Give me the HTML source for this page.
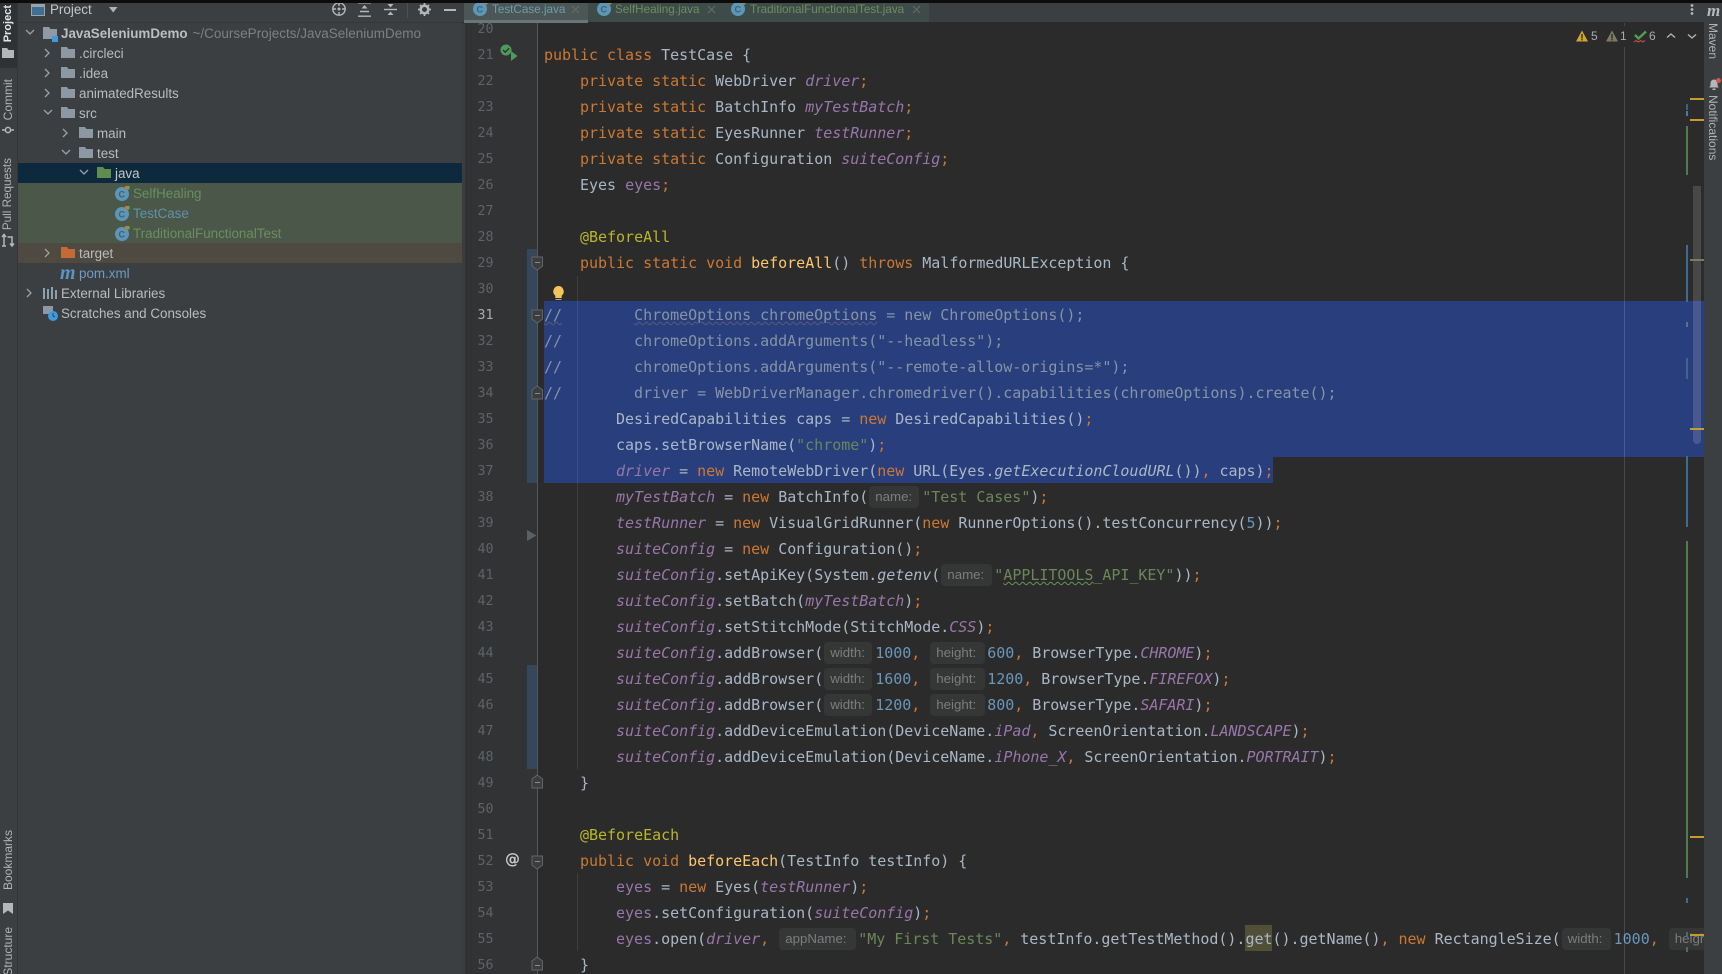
<!DOCTYPE html>
<html><head><meta charset="utf-8"><style>
html,body{margin:0;padding:0;background:#2b2b2b}
#r{position:relative;width:1722px;height:974px;overflow:hidden;background:#2b2b2b;font-family:"Liberation Sans",sans-serif;filter:blur(.35px)}
.a{position:absolute}
.v{position:absolute;writing-mode:vertical-rl;transform:rotate(180deg);font-size:12px;color:#b0b2b3;white-space:nowrap;line-height:14px}
.h{position:absolute;writing-mode:vertical-rl;font-size:12px;color:#b0b2b3;white-space:nowrap;line-height:14px}
.row{position:absolute;left:18px;width:444px;height:20px}
.t{position:absolute;font-size:13.4px;line-height:20px;color:#bbb;white-space:nowrap;margin-top:1px}
.g{color:#6a8f5f}
svg{position:absolute;overflow:visible}
#code{position:absolute;left:544px;top:22px;width:1160px;height:952px;overflow:hidden}
#code pre{position:absolute;left:0;top:-6px;margin:0;font:15px/26px "DejaVu Sans Mono",monospace;letter-spacing:-.025px;color:#a9b7c6;white-space:pre}
#nums{position:absolute;left:462px;top:17px;width:31.5px;text-align:right;font:13.3px/26px "DejaVu Sans Mono",monospace;color:#606366;white-space:pre}
.k{color:#cc7832}.f{color:#9876aa}.fi{color:#9876aa;font-style:italic}.s{color:#6a8759}.n{color:#6897bb}.an{color:#bbb529}.m{color:#ffc66d}.c{color:#8693a6}
.si{font-style:italic}
.hn{display:inline-block;box-sizing:border-box;height:22px;background:#353636;border-radius:4px;color:#7b7d7e;font:13.3px/22px "Liberation Sans",sans-serif;letter-spacing:0;padding-left:6px;white-space:nowrap;overflow:hidden;vertical-align:top;margin-top:2px}
.tab{position:absolute;top:1px;height:19px;font-size:11.7px;line-height:18px;white-space:nowrap}
.st{position:absolute;left:1686px;width:2px}
.yl{position:absolute;left:1690px;width:14px;height:2px;background:#c79b2e}
.ci{font:bold 9px "Liberation Sans",sans-serif;fill:#44606e}
</style></head><body><div id="r">

<!-- left strip -->
<div class="a" style="left:0;top:0;width:18px;height:974px;background:#3c3f41"></div>
<div class="a" style="left:0;top:3px;width:18px;height:65px;background:#2f3234"></div>
<div class="a" style="left:17px;top:0;width:1px;height:974px;background:#333536"></div>
<div class="v" style="left:1px;top:5px;color:#e4e4e4;font-weight:bold;font-size:11px">Project</div>
<svg style="left:2px;top:48px" width="12" height="10"><path d="M0 0h5l1.5 2H12v8H0z" fill="#b4b6b7"/></svg>
<div class="v" style="left:1px;top:79px">Commit</div>
<svg style="left:2px;top:124px" width="12" height="12"><circle cx="6" cy="6" r="2.6" fill="none" stroke="#b4b6b7" stroke-width="1.5"/><path d="M0 6h3M9 6h3" stroke="#b4b6b7" stroke-width="1.5"/></svg>
<div class="v" style="left:1px;top:158px;font-size:11.7px">Pull Requests</div>
<svg style="left:2px;top:234px" width="12" height="12"><path d="M2 12V1M0 3l2-2.5L4 3M5.500 3H10V12M8 9.500l2 2.500 2-2.500M0 12h4" fill="none" stroke="#b4b6b7" stroke-width="1.5"/></svg>
<div class="v" style="left:1px;top:830px">Bookmarks</div>
<svg style="left:3px;top:903px" width="10" height="11"><path d="M0 0h10v11L5 7.500 0 11z" fill="#b4b6b7"/></svg>
<div class="v" style="left:1px;top:927px">Structure</div>

<!-- project panel -->
<div class="a" style="left:18px;top:0;width:444px;height:974px;background:#3c3f41"></div>
<div class="a" style="left:18px;top:22px;width:444px;height:1px;background:#35383a"></div>
<svg style="left:31px;top:4px" width="14" height="12"><rect x=".5" y=".5" width="13" height="11" fill="#3f6f92" stroke="#9aa3a8"/><rect x=".5" y=".5" width="13" height="2.5" fill="#9aa3a8"/></svg>
<div class="t" style="left:50px;top:0;margin:0;color:#c4c6c7">Project</div>
<svg style="left:109px;top:7px" width="9" height="6"><path d="M0 0h8.500L4.200 5.500z" fill="#b0b2b3"/></svg>
<svg style="left:332px;top:2px" width="15" height="15"><circle cx="7" cy="7" r="6.200" fill="none" stroke="#b4b6b7" stroke-width="1.400"/><circle cx="7" cy="7" r="1.500" fill="#b4b6b7"/><path d="M7 .5v3.500M7 10v3.500M.5 7H4M10 7h3.500" stroke="#b4b6b7" stroke-width="1.400"/></svg>
<svg style="left:358px;top:2px" width="14" height="15"><path d="M0 .8h13M0 14.200h13M2 9.500h9" stroke="#b4b6b7" stroke-width="1.400"/><path d="M6.500 3l3 3.500h-6z" fill="#b4b6b7"/></svg>
<svg style="left:384px;top:2px" width="14" height="15"><path d="M0 7.500h13" stroke="#b4b6b7" stroke-width="1.400"/><path d="M6.500 5.500l-3-3.500h6zM6.500 9.500l-3 3.500h6z" fill="#b4b6b7"/></svg>
<div class="a" style="left:407px;top:3px;width:1px;height:15px;background:#4d5052"></div>
<svg style="left:418px;top:3px" width="13" height="13"><circle cx="6.500" cy="6.500" r="3.800" fill="none" stroke="#b4b6b7" stroke-width="2.600"/><path d="M6.500 0v2.500M6.500 10.500V13M0 6.500h2.500M10.500 6.500H13M2 2l1.700 1.700M9.300 9.300L11 11M11 2L9.300 3.700M3.700 9.300L2 11" stroke="#b4b6b7" stroke-width="1.800"/></svg>
<div class="a" style="left:444px;top:9px;width:12px;height:1.600px;background:#b4b6b7"></div>

<div class="row" style="top:163px;background:#0d293e"></div>
<div class="row" style="top:183px;height:60px;background:#4b5749"></div>
<div class="row" style="top:243px;background:#4e4a41"></div>

<!-- chevrons -->
<svg style="left:0;top:0" width="100" height="320"><g fill="none" stroke="#9da0a2" stroke-width="1.300">
<path d="M26 30l4 4 4-4"/>
<path d="M45 49l4 4-4 4M45 69l4 4-4 4M45 89l4 4-4 4M45 249l4 4-4 4"/>
<path d="M44 110l4 4 4-4"/>
<path d="M63 129l4 4-4 4"/>
<path d="M62 150l4 4 4-4"/>
<path d="M80 170l4 4 4-4"/>
<path d="M27 289l4 4-4 4"/>
</g></svg>
<!-- root icon -->
<svg style="left:43px;top:27px" width="16" height="15"><path d="M0 0h6l1.500 2H14v10H0z" fill="#8e9ba6"/><rect x="9" y="9" width="6" height="6" fill="#3d9be0"/></svg>
<div class="t" style="left:61px;top:23px"><span style="font-weight:bold;color:#bcbec0;font-size:13.400px">JavaSeleniumDemo</span><span style="color:#7d8082;margin-left:5px;font-size:13.500px">~/CourseProjects/JavaSeleniumDemo</span></div>
<!-- folders -->
<svg style="left:0;top:0" width="120" height="300"><g fill="#8c99a4">
<path d="M61 47h6l1.500 2H75v9H61zM61 67h6l1.500 2H75v9H61zM61 87h6l1.500 2H75v9H61zM61 107h6l1.500 2H75v9H61z"/>
<path d="M79 127h6l1.500 2H93v9H79zM79 147h6l1.500 2H93v9H79z"/></g>
<path d="M97 167h6l1.500 2H111v9H97z" fill="#5f8d4e"/>
<path d="M61 247h6l1.500 2H75v9H61z" fill="#c46a34"/>
</svg>
<div class="t" style="left:79px;top:43px">.circleci</div>
<div class="t" style="left:79px;top:63px">.idea</div>
<div class="t" style="left:79px;top:83px">animatedResults</div>
<div class="t" style="left:79px;top:103px">src</div>
<div class="t" style="left:97px;top:123px">main</div>
<div class="t" style="left:97px;top:143px">test</div>
<div class="t" style="left:115px;top:163px;color:#c4c6c7">java</div>
<!-- class icons -->
<svg style="left:115px;top:186px" width="16" height="15"><circle cx="7" cy="8" r="7" fill="#5b97b8"/><text x="3.500" y="11.300" class="ci">C</text><rect x="10" y="0" width="2.500" height="3.500" fill="#d0752e"/><rect x="12.500" y="0" width="2" height="3.500" fill="#6aa84f"/></svg>
<svg style="left:115px;top:206px" width="16" height="15"><circle cx="7" cy="8" r="7" fill="#5b97b8"/><text x="3.500" y="11.300" class="ci">C</text><rect x="10" y="0" width="2.500" height="3.500" fill="#d0752e"/><rect x="12.500" y="0" width="2" height="3.500" fill="#6aa84f"/></svg>
<svg style="left:115px;top:226px" width="16" height="15"><circle cx="7" cy="8" r="7" fill="#5b97b8"/><text x="3.500" y="11.300" class="ci">C</text><rect x="10" y="0" width="2.500" height="3.500" fill="#d0752e"/><rect x="12.500" y="0" width="2" height="3.500" fill="#6aa84f"/></svg>
<div class="t g" style="left:133px;top:183px">SelfHealing</div>
<div class="t" style="left:133px;top:203px;color:#5f92ab">TestCase</div>
<div class="t g" style="left:133px;top:223px">TraditionalFunctionalTest</div>
<div class="t" style="left:79px;top:243px">target</div>
<div class="a" style="left:60px;top:263px;font:italic bold 20px/20px 'Liberation Serif',serif;color:#5a93c4">m</div>
<div class="t" style="left:79px;top:263px;color:#6a9cc4">pom.xml</div>
<svg style="left:43px;top:287px" width="15" height="12"><path d="M1 1v11M5 2v10M9 0v12M13 3v9" stroke="#8fa0ac" stroke-width="2"/></svg>
<div class="t" style="left:61px;top:283px">External Libraries</div>
<svg style="left:43px;top:306px" width="16" height="16"><rect x="0" y="0" width="10" height="8" fill="#8c99a4"/><circle cx="10" cy="10" r="5" fill="#3d9be0"/><path d="M10 7v3l2 1" stroke="#27475e" fill="none"/></svg>
<div class="t" style="left:61px;top:303px">Scratches and Consoles</div>

<!-- tab bar -->
<div class="a" style="left:462px;top:0;width:1242px;height:22px;background:#3c3f41"></div>
<div class="a" style="left:588px;top:3px;width:341px;height:19px;background:#3f4b49"></div>
<div class="a" style="left:464px;top:3px;width:124px;height:20px;background:#4c5755"></div>
<div class="a" style="left:464px;top:20px;width:124px;height:3px;background:#68767c"></div>
<svg style="left:473px;top:1px" width="16" height="15"><circle cx="7" cy="8" r="7" fill="#5b97b8"/><text x="3.500" y="11.300" class="ci">C</text><rect x="10" y="0" width="2.500" height="3.500" fill="#d0752e"/><rect x="12.500" y="0" width="2" height="3.500" fill="#6aa84f"/></svg>
<svg style="left:597px;top:1px" width="16" height="15"><circle cx="7" cy="8" r="7" fill="#5b97b8"/><text x="3.500" y="11.300" class="ci">C</text><rect x="10" y="0" width="2.500" height="3.500" fill="#d0752e"/><rect x="12.500" y="0" width="2" height="3.500" fill="#6aa84f"/></svg>
<svg style="left:731px;top:1px" width="16" height="15"><circle cx="7" cy="8" r="7" fill="#5b97b8"/><text x="3.500" y="11.300" class="ci">C</text><rect x="10" y="0" width="2.500" height="3.500" fill="#d0752e"/><rect x="12.500" y="0" width="2" height="3.500" fill="#6aa84f"/></svg>
<div class="tab" style="left:492px;color:#6b9cb0">TestCase.java</div>
<div class="tab g" style="left:615px">SelfHealing.java</div>
<div class="tab g" style="left:750px">TraditionalFunctionalTest.java</div>
<svg style="left:0;top:0" width="1000" height="20"><path d="M572 6l7 7M579 6l-7 7M708 6l7 7M715 6l-7 7M913 6l7 7M920 6l-7 7" stroke="#646c6e" stroke-width="1"/></svg>
<div class="a" style="left:0;top:0;width:1722px;height:3px;background:#0c0c0c"></div>

<!-- gutter -->
<div class="a" style="left:462px;top:23px;width:3px;height:951px;background:#3a3c3e"></div>
<div class="a" style="left:465px;top:23px;width:72px;height:951px;background:#313335"></div>
<div class="a" style="left:527px;top:249px;width:10px;height:234px;background:#35475a"></div>
<div class="a" style="left:527px;top:665px;width:10px;height:104px;background:#35475a"></div>
<div class="a" style="left:536.500px;top:23px;width:1.500px;height:951px;background:#555759"></div>

<!-- selection -->
<div class="a" style="left:544px;top:301px;width:1160px;height:156px;background:#293e7c"></div>
<div class="a" style="left:544px;top:457px;width:729px;height:26px;background:#293e7c"></div>
<!-- indent guides -->
<div class="a" style="left:577px;top:276px;width:1px;height:493px;background:rgba(255,255,255,.09)"></div>
<div class="a" style="left:577px;top:873px;width:1px;height:78px;background:rgba(255,255,255,.09)"></div>
<!-- get highlight -->
<div class="a" style="left:1245px;top:925px;width:27px;height:26px;background:#524f38"></div>

<div id="nums">20
21
22
23
24
25
26
27
28
29
30
<span style="color:#a9abad">31</span>
32
33
34
35
36
37
38
39
40
41
42
43
44
45
46
47
48
49
50
51
52
53
54
55
56</div>

<div id="code"><pre>

<span class="k">public class </span>TestCase {
    <span class="k">private static </span>WebDriver <span class="fi">driver</span><span class="k">;</span>
    <span class="k">private static </span>BatchInfo <span class="fi">myTestBatch</span><span class="k">;</span>
    <span class="k">private static </span>EyesRunner <span class="fi">testRunner</span><span class="k">;</span>
    <span class="k">private static </span>Configuration <span class="fi">suiteConfig</span><span class="k">;</span>
    Eyes <span class="f">eyes</span><span class="k">;</span>

    <span class="an">@BeforeAll</span>
    <span class="k">public static void </span><span class="m">beforeAll</span>() <span class="k">throws </span>MalformedURLException {

<span class="c"><span style="text-decoration:underline wavy #5d5a78 1px">//</span>        <span style="text-decoration:underline wavy #5d5a78 1px">ChromeOptions chromeOptions</span> = new ChromeOptions();</span>
<span class="c">//        chromeOptions.addArguments("--headless");</span>
<span class="c">//        chromeOptions.addArguments("--remote-allow-origins=*");</span>
<span class="c">//        driver = WebDriverManager.chromedriver().capabilities(chromeOptions).create();</span>
        DesiredCapabilities caps = <span class="k">new </span>DesiredCapabilities()<span class="k">;</span>
        caps.setBrowserName(<span class="s">"chrome"</span>)<span class="k">;</span>
        <span class="fi">driver</span> = <span class="k">new </span>RemoteWebDriver(<span class="k">new </span>URL(Eyes.<span class="si">getExecutionCloudURL</span>())<span class="k">, </span>caps)<span class="k">;</span>
        <span class="fi">myTestBatch</span> = <span class="k">new </span>BatchInfo(<span class="hn" style="width:50px;margin-left:1px;margin-right:3px">name:</span><span class="s">"Test Cases"</span>)<span class="k">;</span>
        <span class="fi">testRunner</span> = <span class="k">new </span>VisualGridRunner(<span class="k">new </span>RunnerOptions().testConcurrency(<span class="n">5</span>))<span class="k">;</span>
        <span class="fi">suiteConfig</span> = <span class="k">new </span>Configuration()<span class="k">;</span>
        <span class="fi">suiteConfig</span>.setApiKey(System.<span class="si">getenv</span>(<span class="hn" style="width:51px;margin-left:1px;margin-right:2px">name:</span><span class="s">"<span style="text-decoration:underline wavy #6f8f5a 1px">APPLITOOLS</span>_API_KEY"</span>))<span class="k">;</span>
        <span class="fi">suiteConfig</span>.setBatch(<span class="fi">myTestBatch</span>)<span class="k">;</span>
        <span class="fi">suiteConfig</span>.setStitchMode(StitchMode.<span class="fi">CSS</span>)<span class="k">;</span>
        <span class="fi">suiteConfig</span>.addBrowser(<span class="hn" style="width:48px;margin-left:1px;margin-right:3px">width:</span><span class="n">1000</span><span class="k">, </span><span class="hn" style="width:55px;margin-left:1px;margin-right:2px">height:</span><span class="n">600</span><span class="k">, </span>BrowserType.<span class="fi">CHROME</span>)<span class="k">;</span>
        <span class="fi">suiteConfig</span>.addBrowser(<span class="hn" style="width:48px;margin-left:1px;margin-right:3px">width:</span><span class="n">1600</span><span class="k">, </span><span class="hn" style="width:55px;margin-left:1px;margin-right:2px">height:</span><span class="n">1200</span><span class="k">, </span>BrowserType.<span class="fi">FIREFOX</span>)<span class="k">;</span>
        <span class="fi">suiteConfig</span>.addBrowser(<span class="hn" style="width:48px;margin-left:1px;margin-right:3px">width:</span><span class="n">1200</span><span class="k">, </span><span class="hn" style="width:55px;margin-left:1px;margin-right:2px">height:</span><span class="n">800</span><span class="k">, </span>BrowserType.<span class="fi">SAFARI</span>)<span class="k">;</span>
        <span class="fi">suiteConfig</span>.addDeviceEmulation(DeviceName.<span class="fi">iPad</span><span class="k">, </span>ScreenOrientation.<span class="fi">LANDSCAPE</span>)<span class="k">;</span>
        <span class="fi">suiteConfig</span>.addDeviceEmulation(DeviceName.<span class="fi">iPhone_X</span><span class="k">, </span>ScreenOrientation.<span class="fi">PORTRAIT</span>)<span class="k">;</span>
    }

    <span class="an">@BeforeEach</span>
    <span class="k">public void </span><span class="m">beforeEach</span>(TestInfo testInfo) {
        <span class="f">eyes</span> = <span class="k">new </span>Eyes(<span class="fi">testRunner</span>)<span class="k">;</span>
        <span class="f">eyes</span>.setConfiguration(<span class="fi">suiteConfig</span>)<span class="k">;</span>
        <span class="f">eyes</span>.open(<span class="fi">driver</span><span class="k">, </span><span class="hn" style="width:77px;margin-left:1px;margin-right:2px">appName:</span><span class="s">"My First Tests"</span><span class="k">, </span>testInfo.getTestMethod().get().getName()<span class="k">, new </span>RectangleSize(<span class="hn" style="width:49px;margin-left:1px;margin-right:3px">width:</span><span class="n">1000</span><span class="k">, </span><span class="hn" style="width:55px;margin-left:1px;margin-right:2px">height:</span>
    }</pre></div>

<!-- gutter icons -->
<svg style="left:0;top:0" width="600" height="974">
<circle cx="506" cy="50" r="5.500" fill="#4f9a5a"/><path d="M503 50l2.200 2.200 4-4" stroke="#2b2b2b" stroke-width="1.300" fill="none"/><path d="M511 51l6.500 5-6.500 5z" fill="#4f9a5a"/>
<path d="M527 530l9.500 5.500-9.500 5.500z" fill="#5d6063"/>
<path d="M558 286a5.400 5.400 0 0 1 3.200 9.600v2.400h-6.400v-2.400a5.400 5.400 0 0 1 3.200-9.600z" fill="#f2c55c" transform="translate(.5 0)"/><path d="M555.500 299.500h6" stroke="#a5a7a9"/>
<g fill="#3b3d3f" stroke="#626567" stroke-width="1">
<path d="M532 257h10.500v9l-5.250 4-5.250-4z"/><path d="M532 310h10.500v9l-5.250 4-5.250-4z"/>
<path d="M532 399v-9l5.250-4 5.250 4v9z"/><path d="M532 788v-9l5.250-4 5.250 4v9z"/>
<path d="M532 856h10.500v9l-5.250 4-5.250-4z"/><path d="M532 970v-9l5.250-4 5.250 4v9z"/>
</g>
<path d="M535 262.500h5M535 315.500h5M535 393.500h5M535 782.500h5M535 861.500h5M535 965.500h5" stroke="#8a8d8f" stroke-width="1"/>
</svg>
<div class="a" style="left:505px;top:851px;font:bold 15px/16px 'DejaVu Sans',sans-serif;color:#c8cacb">@</div>

<!-- right margin -->
<div class="a" style="left:1624px;top:47px;width:1px;height:927px;background:rgba(255,255,255,.14)"></div>
<div class="a" style="left:1624px;top:23px;width:1px;height:3px;background:rgba(255,255,255,.14)"></div>

<!-- inspection widget -->
<svg style="left:1570px;top:28px" width="130" height="18">
<path d="M12 2.500l6 11H6z" fill="#d0a532"/><rect x="11.300" y="6" width="1.400" height="4.500" fill="#3b2f0e"/><rect x="11.300" y="11" width="1.400" height="1.400" fill="#3b2f0e"/>
<path d="M42 2.500l6 11H36z" fill="#807a60"/><rect x="41.300" y="6" width="1.400" height="4.500" fill="#2b2b2b"/><rect x="41.300" y="11" width="1.400" height="1.400" fill="#2b2b2b"/>
<path d="M65 7l3.500 3.500L76 3.500" fill="none" stroke="#4fa04f" stroke-width="2.400"/>
<path d="M64 14l2.200-1.500 2.200 1.500 2.200-1.500 2.200 1.500 2.200-1.500" fill="none" stroke="#c74a3f" stroke-width="1.100"/>
<path d="M97 9.500l4-3.500 4 3.500M118 6.500l4 3.500 4-3.500" fill="none" stroke="#b0b2b3" stroke-width="1.400"/>
</svg>
<div class="a" style="left:1591px;top:27px;font-size:12px;line-height:18px;color:#a9abad">5</div>
<div class="a" style="left:1620px;top:27px;font-size:12px;line-height:18px;color:#a9abad">1</div>
<div class="a" style="left:1649px;top:27px;font-size:12px;line-height:18px;color:#a9abad">6</div>
<svg style="left:1689px;top:3px" width="6" height="14"><circle cx="3" cy="2.500" r="1.400" fill="#b4b6b7"/><circle cx="3" cy="6.500" r="1.400" fill="#b4b6b7"/><circle cx="3" cy="10.500" r="1.400" fill="#b4b6b7"/></svg>

<!-- error stripe -->
<div class="a" style="left:1693px;top:186px;width:8px;height:258px;border-radius:0 0 4px 4px;background:rgba(255,255,255,.14)"></div>
<div class="st" style="top:104px;height:6px;background:#3f5f80"></div>
<div class="st" style="top:111px;height:5px;background:#4a7aa0"></div>
<div class="st" style="top:126px;height:49px;background:#507a52"></div>
<div class="st" style="top:245px;height:57px;background:#3f6a92"></div>
<div class="st" style="top:322px;height:5px;background:#5d7088"></div>
<div class="st" style="top:358px;height:21px;background:#45628f"></div>
<div class="st" style="top:456px;height:71px;background:#3f6a92"></div>
<div class="st" style="top:541px;height:337px;background:#507a52"></div>
<div class="st" style="top:898px;height:5px;background:#3f6a92"></div>
<div class="st" style="top:932px;height:5px;background:#3f6a92"></div>
<div class="st" style="top:947px;height:5px;background:#556666"></div>
<div class="yl" style="top:98px"></div>
<div class="yl" style="top:119px"></div>
<div class="yl" style="top:259px;background:#7d7a62"></div>
<div class="yl" style="top:428px"></div>
<div class="yl" style="top:836px"></div>
<div class="yl" style="top:934px"></div>

<!-- right strip -->
<div class="a" style="left:1704px;top:3px;width:18px;height:971px;background:#3c3f41"></div>
<div class="a" style="left:1707px;top:2px;font:italic bold 17px/18px 'Liberation Serif',serif;color:#b8babb">m</div>
<div class="h" style="left:1706px;top:23px">Maven</div>
<svg style="left:1708px;top:78px" width="14" height="13"><path d="M1 9.500c1.500-1 1.500-2.500 1.500-4.500a3.500 3.500 0 0 1 7 0c0 2 0 3.500 1.500 4.500z" fill="#b4b6b7"/><rect x="4.500" y="10.500" width="3" height="1.500" fill="#b4b6b7"/><circle cx="10.500" cy="2.500" r="2.500" fill="#d9534f"/></svg>
<div class="h" style="left:1706px;top:95px">Notifications</div>

</div></body></html>
